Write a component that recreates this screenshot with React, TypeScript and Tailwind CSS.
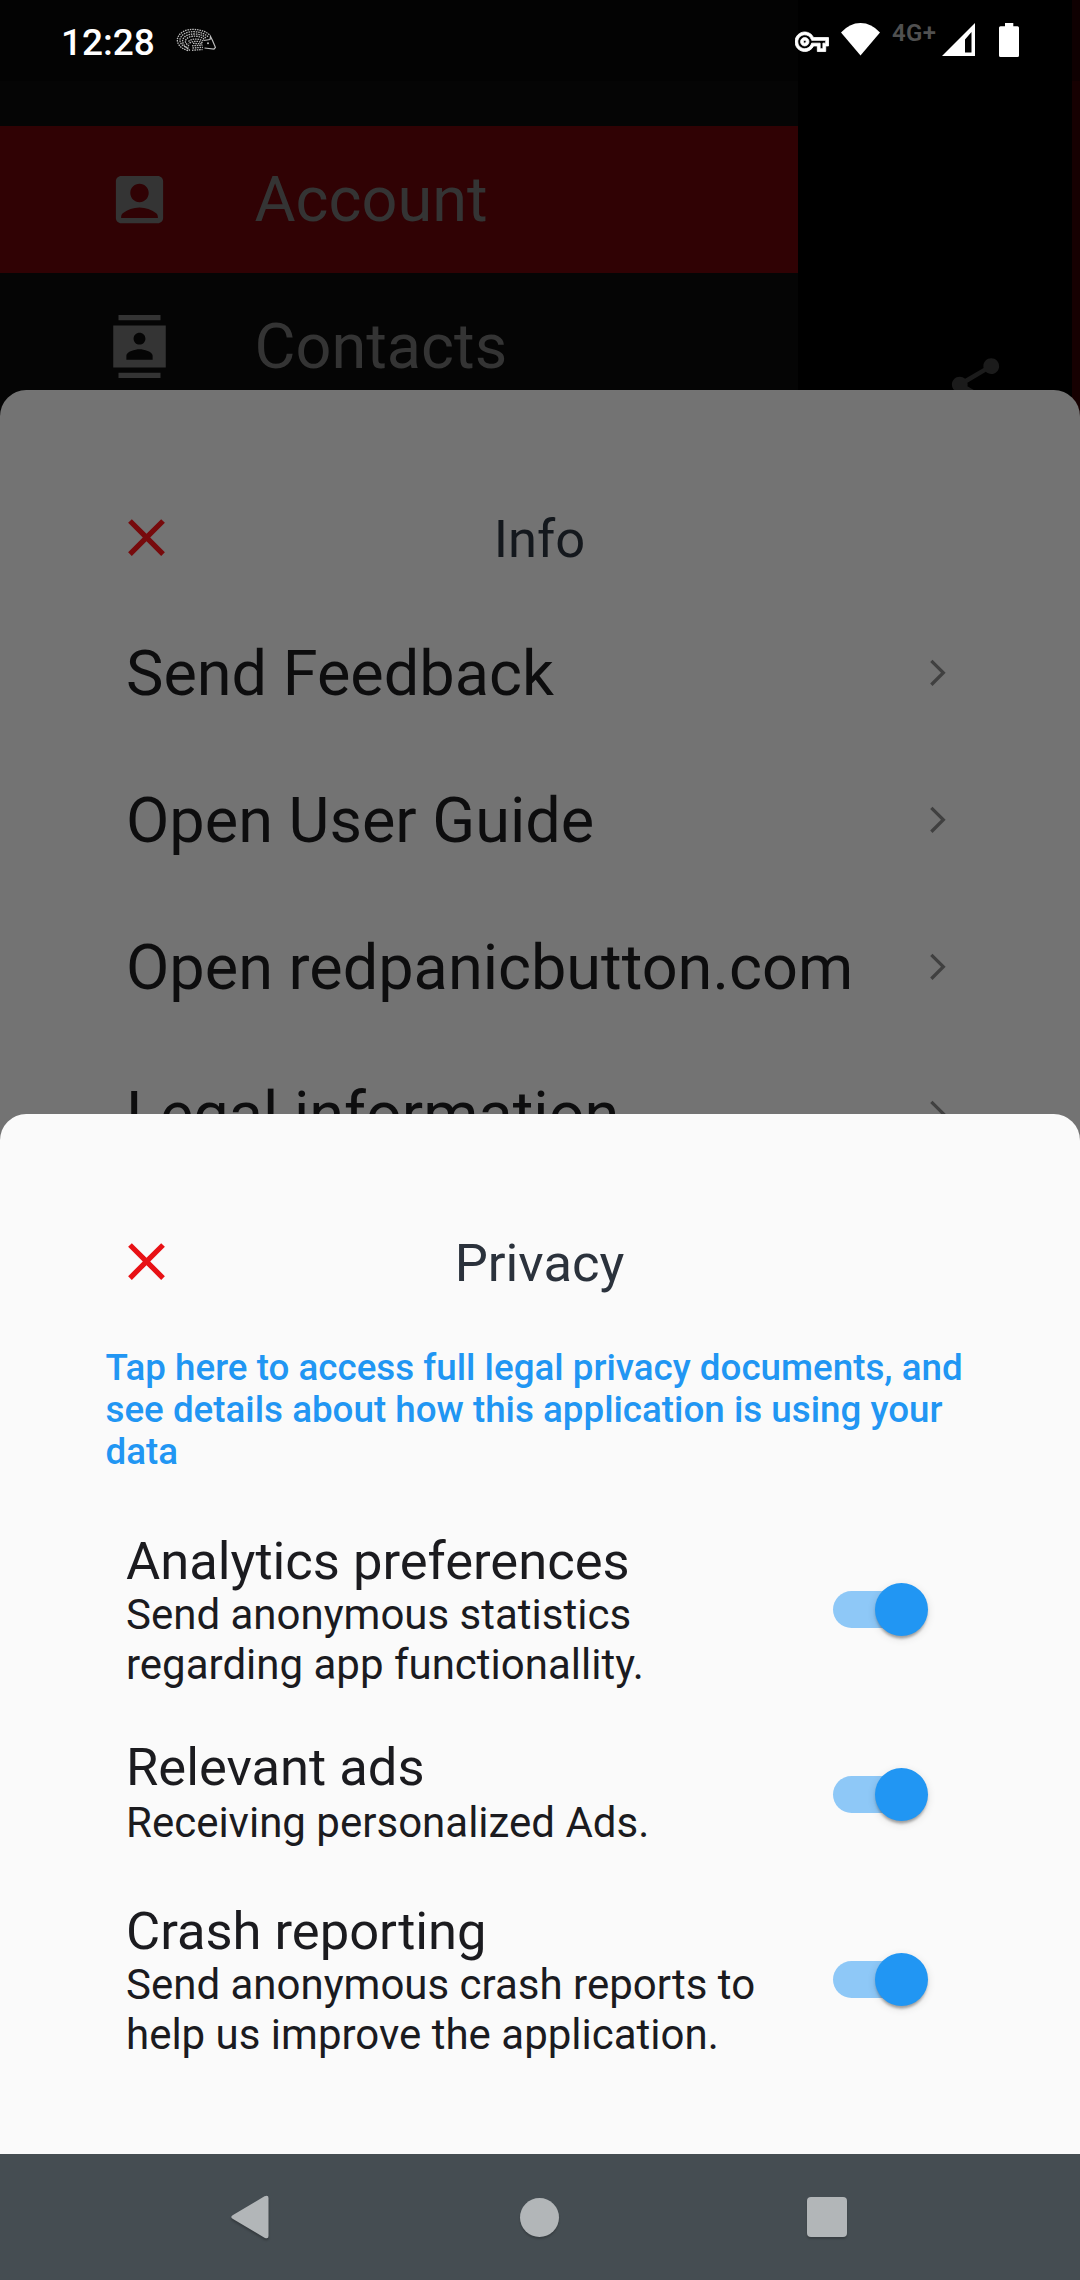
import React from "react";

function CloseIcon({ className }: { className: string }) {
  return (
    <svg viewBox="0 0 24 24" className={className} fill="currentColor">
      <path d="M19 6.41 17.59 5 12 10.59 6.41 5 5 6.41 10.59 12 5 17.59 6.41 19 12 13.41 17.59 19 19 17.59 13.41 12z" />
    </svg>
  );
}

function Chevron() {
  return (
    <svg viewBox="0 0 24 24" className="size-[31.5px] text-[#404040]" fill="currentColor">
      <path d="M6.23 20.23 8 22l10-10L8 2 6.23 3.77 14.46 12z" />
    </svg>
  );
}

function Hedgehog() {
  return (
    <svg viewBox="0 0 40 24" className="h-6 w-10" fill="none" stroke="#bdbdbd">
      <g strokeWidth="1.3" strokeDasharray="1.5 .9">
        <path d="M12 22.500C4 20.500 .5 15 1.500 10.500C3 4.500 10 1.200 17 1.400C25 1.600 31 4 34 7.500" />
        <path d="M13 20C5.500 18.500 3 14 4.200 10.500C6 5.500 12 3.600 18 3.700C24 3.800 29 5.700 32 8.700" strokeDashoffset="1" />
        <path d="M14 22.500C8 18.500 5.500 14 7 11C9 7 14 5.900 19 6C24 6.100 27 7.300 30 10" />
        <path d="M14 18.500C9.500 16 8.500 13.500 10 11.500C12 8.800 16 8.100 19 8.200C23 8.300 26 9.300 28.500 11.500" strokeDashoffset="1.500" />
        <path d="M12.500 13.500C15 10.800 21 10 27 12.700" />
        <path d="M12.500 16C16 12.800 22 12.500 26.500 14.800" strokeDashoffset="1" />
        <path d="M16 22.300L26.500 21.500M16.500 20L27 19.300M16 17.800L26.500 17.200M17 15.400L26 15.800" />
      </g>
      <path d="M27.500 12.500L34 11.500L34.500 8.500L36.500 12.500L39.500 19.500L38 21L28.500 20" strokeWidth="1.200" />
      <circle cx="32" cy="15.300" r="1" fill="#bdbdbd" stroke="none" />
    </svg>
  );
}

function StatusBar() {
  return (
    <header className="z-10 col-start-1 row-start-1 flex h-[81px] items-start font-medium text-white">
      <span className="ml-[61px] mt-[21px] text-[37px] leading-[44px]">12:28</span>
      <span className="ml-[21px] mt-[28px]">
        <Hedgehog />
      </span>
      <div className="ml-auto flex items-start">
        <svg viewBox="0 0 24 24" className="mt-[24.500px] size-[33.5px]" fill="currentColor" stroke="currentColor" strokeWidth=".6">
          <path d="M22 19h-6v-4h-2.680c-1.140 2.420-3.600 4-6.320 4-3.860 0-7-3.140-7-7s3.140-7 7-7c2.720 0 5.170 1.580 6.320 4H24v6h-2v4zm-4-2h2v-4h2v-2H11.940l-.23-.67C11.010 8.340 9.110 7 7 7c-2.760 0-5 2.240-5 5s2.240 5 5 5c2.110 0 4.010-1.340 4.710-3.330l.23-.67H18v4zM7 15c-1.650 0-3-1.350-3-3s1.350-3 3-3 3 1.350 3 3-1.350 3-3 3zm0-4c-.55 0-1 .45-1 1s.45 1 1 1 1-.45 1-1-.45-1-1-1z" />
        </svg>
        <svg viewBox="0 0 39 33" className="ml-[12.5px] mt-[23px] h-[33px] w-[39px]" fill="currentColor">
          <path d="M0 9.500Q8.500 0 19.500 0T39 9.500L19.500 32.500z" />
        </svg>
        <span className="ml-[12px] mt-[19px] w-[50px] text-[24px] font-semibold leading-[29px] tracking-[.3px] text-[#505050]">4G+</span>
        <svg viewBox="0 0 33 33" className="mt-[23px] size-[33px]" fill="currentColor" fillRule="evenodd">
          <path d="M0 33L33 0V33zM23 16.500V29.500H29.500V9z" />
        </svg>
        <svg viewBox="0 0 20 34" className="ml-[24px] mr-[61px] mt-[23px] h-[34px] w-[20px]" fill="currentColor">
          <path d="M6 0h8.300v3.200H18.500A1.500 1.500 0 0 1 20 4.700V32.500A1.500 1.500 0 0 1 18.500 34H1.500A1.500 1.500 0 0 1 0 32.500V4.700A1.500 1.500 0 0 1 1.500 3.200H6z" />
        </svg>
      </div>
    </header>
  );
}

function Background() {
  return (
    <div className="col-start-1 row-start-1 flex h-[440px] bg-black text-[63px] leading-[74px] text-[#343434]">
      <aside className="w-[798px] bg-[#050505]">
        <div className="h-[81px] bg-[#030303]" />
        <div className="mt-[45px] flex h-[147px] items-center bg-[#300204] pl-[107.5px]">
          <svg viewBox="0 0 24 24" className="size-[63px]" fill="currentColor">
            <path d="M19 3H5c-1.100 0-2 .9-2 2v14c0 1.100.9 2 2 2h14c1.100 0 2-.9 2-2V5c0-1.100-.9-2-2-2zm-7 3c1.930 0 3.500 1.570 3.500 3.500S13.930 13 12 13s-3.500-1.570-3.500-3.500S10.070 6 12 6zm7 13H5v-.23c0-.62.28-1.200.76-1.580C7.470 15.820 9.640 15 12 15s4.530.82 6.240 2.190c.48.38.76.97.76 1.580V19z" />
          </svg>
          <span className="ml-[84px]">Account</span>
        </div>
        <div className="flex h-[147px] items-center pl-[107.5px]">
          <svg viewBox="0 0 24 24" className="size-[63px]" fill="currentColor">
            <path d="M20 0H4v2h16V0zM4 24h16v-2H4v2zM22 4H2v16h20V4zm-10 2.750c1.240 0 2.250 1.010 2.250 2.250s-1.010 2.250-2.250 2.250S9.750 10.240 9.750 9 10.760 6.750 12 6.750zM17 17H7v-1.500c0-1.670 3.330-2.500 5-2.500s5 .83 5 2.500V17z" />
          </svg>
          <span className="ml-[84px]">Contacts</span>
        </div>
      </aside>
      <svg viewBox="0 0 24 24" className="ml-[145.500px] mt-[353px] size-[63px] text-[#1b1b1b]" fill="currentColor">
        <path d="M18 16.080c-.76 0-1.440.3-1.960.77L8.910 12.700c.05-.23.09-.46.09-.7s-.04-.47-.09-.7l7.050-4.110c.54.5 1.250.81 2.040.81 1.660 0 3-1.340 3-3s-1.340-3-3-3-3 1.340-3 3c0 .24.04.47.09.7L8.040 9.810C7.500 9.310 6.790 9 6 9c-1.660 0-3 1.340-3 3s1.340 3 3 3c.79 0 1.500-.31 2.040-.81l7.120 4.160c-.05.21-.08.43-.08.65 0 1.610 1.310 2.920 2.920 2.920s2.920-1.310 2.920-2.920-1.310-2.920-2.920-2.920z" />
      </svg>
      <div className="ml-auto w-2 bg-[#160001]">
        <div className="h-[81px] bg-[#0f0001]" />
      </div>
    </div>
  );
}

const infoItems = ["Send Feedback", "Open User Guide", "Open redpanicbutton.com", "Legal information"];

function InfoSheet() {
  return (
    <section className="col-start-1 row-start-1 mt-[390px] h-[790px] overflow-hidden rounded-t-[26.25px] bg-[#737373]">
      <div className="mt-[118px] grid h-[62px] grid-cols-[1fr_auto_1fr] items-center pl-[115px] pr-[116px]">
        <CloseIcon className="-mt-[3px] size-[63px] text-[#770a0c]" />
        <h2 className="text-[52.5px] leading-[62px] text-[#14181d]">Info</h2>
      </div>
      <ul className="mt-[30px]">
        {infoItems.map((item) => (
          <li key={item} className="flex h-[147px] items-center justify-between pl-[126px] pr-[126px]">
            <span className="text-[63px] leading-[74px] text-[#0d0d0e]">{item}</span>
            <span className="mb-px mr-[.5px]">
              <Chevron />
            </span>
          </li>
        ))}
      </ul>
    </section>
  );
}

function Toggle() {
  return (
    <span className="flex h-[52.5px] w-[95.5px] items-center">
      <span className="h-[36.75px] w-[86.6px] shrink-0 rounded-full bg-[#8ec8f7]" />
      <span className="-ml-[44.6px] size-[52.5px] shrink-0 rounded-full bg-[#2196f3] shadow-[0_5px_3px_-2.6px_rgba(0,0,0,.2),0_2.6px_2.6px_rgba(0,0,0,.14),0_2.6px_8px_rgba(0,0,0,.12)]" />
    </span>
  );
}

function Preference({ title, className, titleClass, children }: { title: string; className: string; titleClass: string; children: React.ReactNode }) {
  return (
    <li className={`flex justify-between pl-[126px] pr-[151.500px] text-[#1b1b1f] ${className}`}>
      <div className={titleClass}>
        <h3 className="text-[52.5px] leading-[56px]">{title}</h3>
        <p className="text-[42px] leading-[50px]">{children}</p>
      </div>
      <span className="self-center">
        <Toggle />
      </span>
    </li>
  );
}

function PrivacySheet() {
  return (
    <section className="col-start-1 row-start-1 mt-[1114.300px] h-[1039.700px] overflow-hidden rounded-t-[26.25px] bg-[#fafafa]">
      <div className="mt-[118px] grid h-[62px] grid-cols-[1fr_auto_1fr] items-center pl-[115px] pr-[116px]">
        <CloseIcon className="-mt-[3px] size-[63px] text-[#e81115]" />
        <h2 className="text-[52.5px] leading-[62px] text-[#2b323c]">Privacy</h2>
      </div>
      <p className="ml-[105.5px] mt-[53.200px] w-[870px] text-[36.75px] font-medium leading-[42px] text-[#2196f3]">
        Tap here to access full legal privacy documents, and see details about how this application is using your data
      </p>
      <ul className="mt-[31px]">
        <Preference title="Analytics preferences" className="h-[210px]" titleClass="flex flex-col gap-px pt-[29px]">
          Send anonymous statistics
          <br />
          regarding app functionallity.
        </Preference>
        <Preference title="Relevant ads" className="h-[160px]" titleClass="flex flex-col gap-[3px] pt-[24.5px]">
          Receiving personalized Ads.
        </Preference>
        <Preference title="Crash reporting" className="h-[210px]" titleClass="flex flex-col gap-px pt-[28.5px]">
          Send anonymous crash reports to
          <br />
          help us improve the application.
        </Preference>
      </ul>
    </section>
  );
}

function NavigationBar() {
  return (
    <nav className="col-start-1 row-start-1 mt-[2154px] flex h-[126px] items-center bg-[#454d52] pl-[230.5px]">
      <svg viewBox="0 0 38 44" className="h-11 w-[38px] drop-shadow-[0_2px_1px_rgba(0,0,0,.25)]" fill="#b2b6b8">
        <path d="M2 20L33.500 1.300Q37.500-.5 37.500 3V41Q37.500 44.500 33.500 42.700L2 24Q-1.500 22 2 20z" />
      </svg>
      <span className="ml-[251.5px] size-[39px] rounded-full bg-[#b2b6b8] shadow-[0_2px_2px_rgba(0,0,0,.2)]" />
      <span className="ml-[248px] size-10 rounded-[4px] bg-[#b2b6b8] shadow-[0_2px_2px_rgba(0,0,0,.2)]" />
    </nav>
  );
}

export default function App() {
  return (
    <main className="grid h-[2280px] w-[1080px] grid-cols-1 grid-rows-1 items-start overflow-hidden bg-black font-['Roboto',sans-serif]">
      <Background />
      <InfoSheet />
      <PrivacySheet />
      <NavigationBar />
      <StatusBar />
    </main>
  );
}
